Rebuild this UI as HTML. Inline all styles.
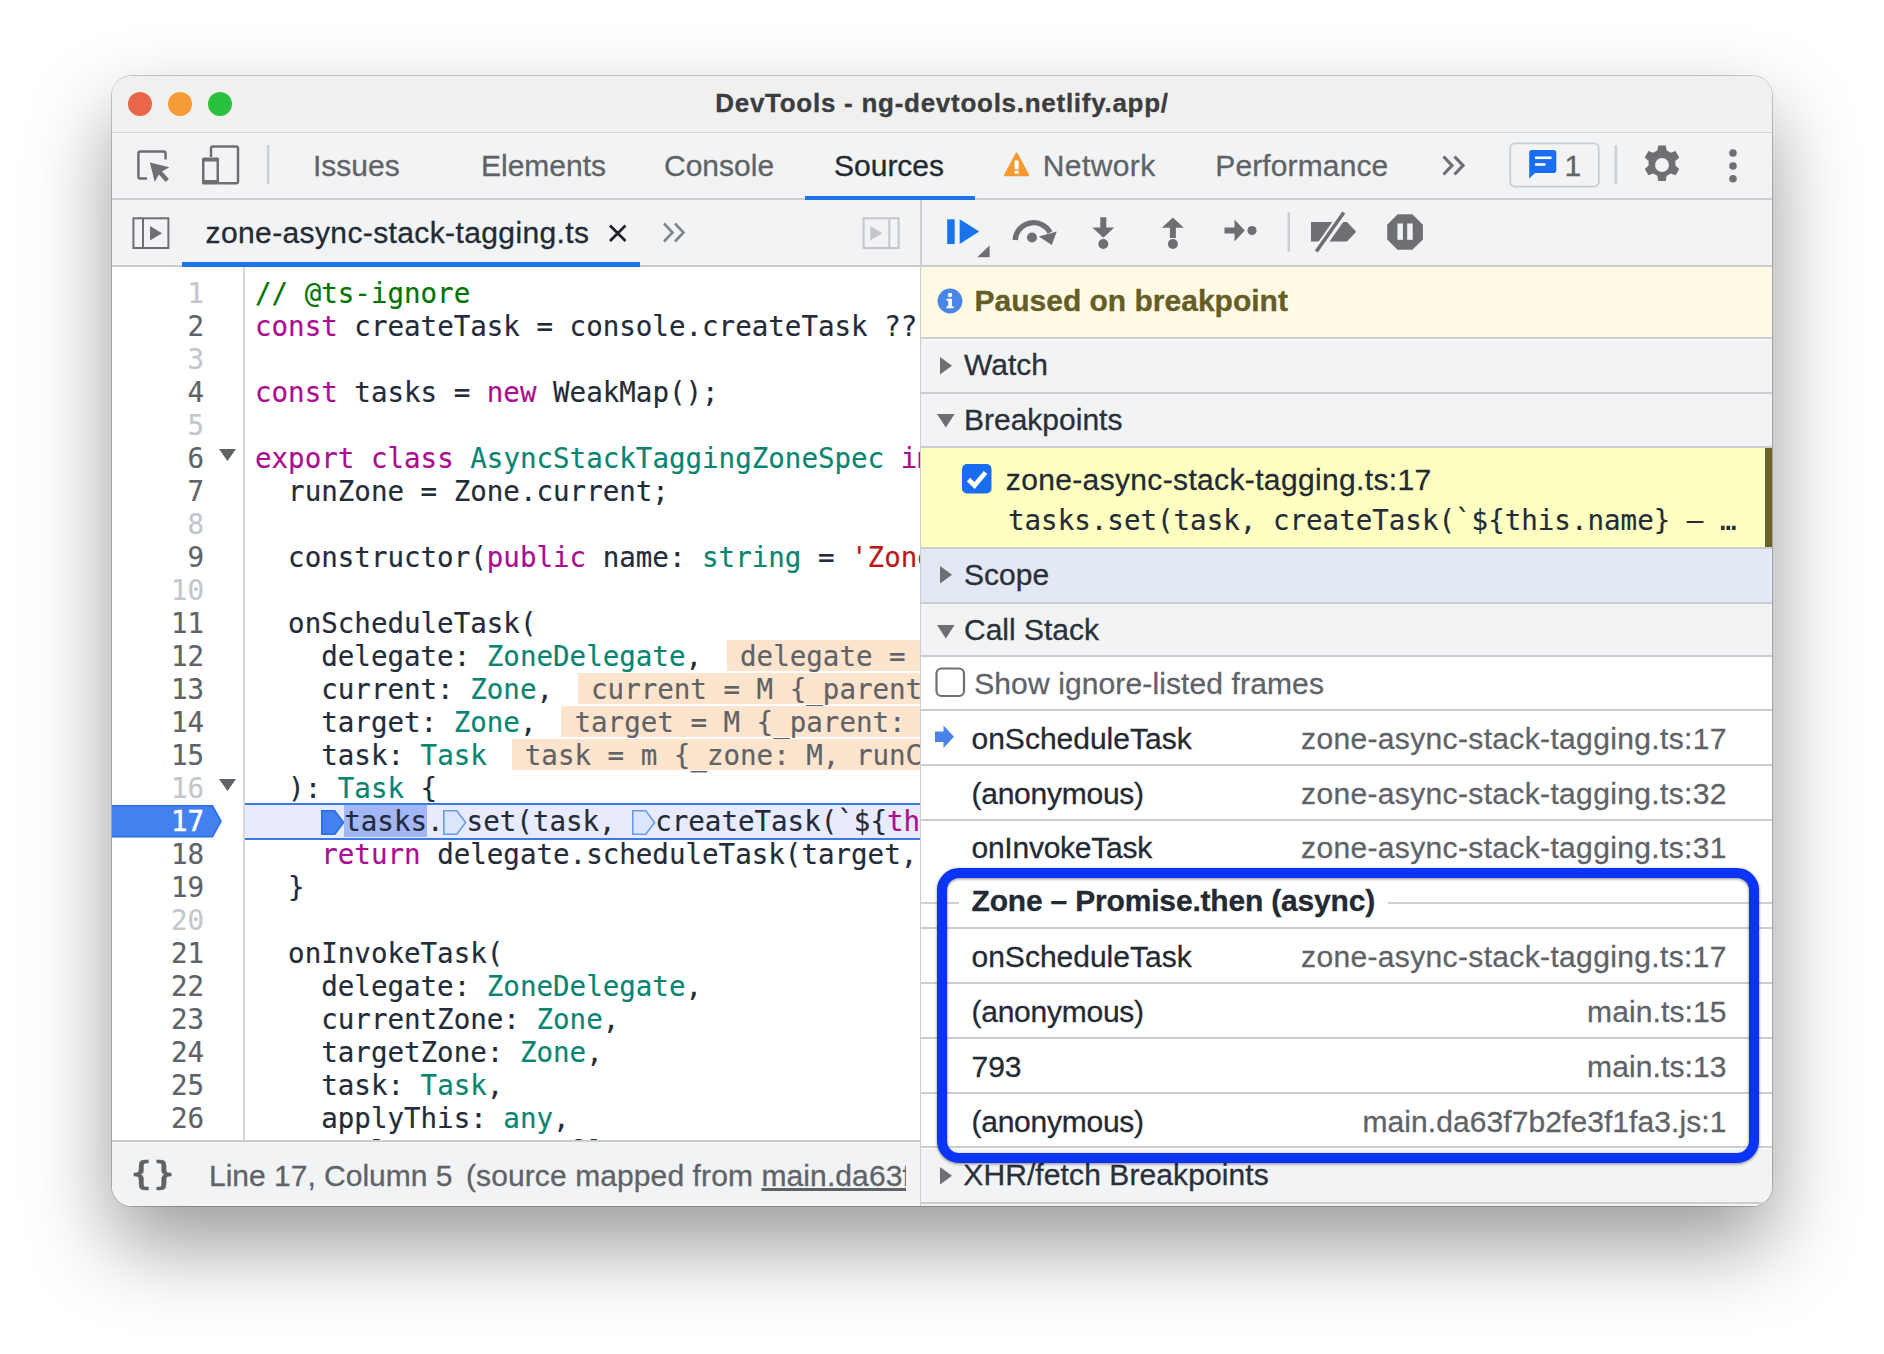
<!DOCTYPE html>
<html lang="en">
<head>
<meta charset="utf-8">
<title>DevTools - ng-devtools.netlify.app/</title>
<style>
*{box-sizing:border-box;margin:0;padding:0}
html,body{width:1884px;height:1354px;background:#fff;overflow:hidden}
body{position:relative;font-family:"Liberation Sans",Arial,sans-serif;color:#202124}
.abs{position:absolute}
#shadow{position:absolute;left:112px;top:76px;width:1660px;height:1130px;border-radius:20px;
  box-shadow:0 0 0 1px rgba(0,0,0,.2),0 39px 84px rgba(0,0,0,.4);background:#f1f3f4}
#win{position:absolute;left:0;top:0;width:1884px;height:1354px;clip-path:inset(76px 112px 148px 112px round 20px);background:#fff}
.hl{position:absolute;background:#cbcdd1}
.ui{position:absolute;white-space:nowrap;font-size:30px;line-height:36px;color:#5f6368;-webkit-text-stroke:.3px}
.mono{font-family:"DejaVu Sans Mono","Liberation Mono",monospace}
/* code */
#code{position:absolute;left:112px;top:267px;width:808px;height:874px;overflow:hidden;background:#fff}
.ln,.cl{font-family:"DejaVu Sans Mono","Liberation Mono",monospace}
.ln{position:absolute;left:0;margin-top:.3px;-webkit-text-stroke:.2px;width:92px;text-align:right;font-size:27.5px;line-height:33px;height:33px;color:#5f6368;white-space:pre}
.ln.dim{color:#c3c6ca}
.cl{position:absolute;left:143px;margin-top:.3px;-webkit-text-stroke:.18px;font-size:27.5px;line-height:33px;height:33px;white-space:pre;color:#232c38}
.k{color:#ab0d90}.c{color:#007400}.t{color:#088571}.s{color:#bb171a}
.iv{background:linear-gradient(#fde5cd,#fde5cd) no-repeat 0 0/100% 31px;color:#5f6368}

.iv{margin-left:25px;padding:0 13px}
.sel{background:#a3b6f8}
.bp{display:inline-block;width:23px;height:25px;vertical-align:-4px;margin-left:-.300px;margin-right:.300px}
.bp svg{display:block}
</style>
</head>
<body>
<div id="shadow"></div>
<div id="win">
<!-- title bar -->
<div class="abs" id="titlebar" style="left:112px;top:75px;width:1660px;height:58px;background:#f0f0ef"></div>
<div class="abs" style="left:128px;top:92px;width:24px;height:24px;border-radius:50%;background:#e8674a"></div>
<div class="abs" style="left:168px;top:92px;width:24px;height:24px;border-radius:50%;background:#f59b38"></div>
<div class="abs" style="left:208px;top:92px;width:24px;height:24px;border-radius:50%;background:#2ac13f"></div>
<div class="abs" id="title" style="left:112px;width:1660px;top:86px;text-align:center;font-weight:bold;font-size:26px;line-height:34px;color:#3b3d40;white-space:nowrap;letter-spacing:.73px;-webkit-text-stroke:.3px">DevTools - ng-devtools.netlify.app/</div>
<div class="hl" style="left:112px;top:132.200px;width:1660px;height:1.300px;background:#d3d4d6"></div>

<!-- main toolbar -->
<div class="abs" id="maintb" style="left:112px;top:133px;width:1660px;height:65px;background:#f1f3f4"></div>
<div class="hl" style="left:112px;top:198px;width:1660px;height:2px"></div>

<svg class="abs" style="left:112px;top:134px" width="1660" height="132" viewBox="112 134 1660 132" fill="none">
<!-- inspect -->
<path d="M165.6 159.5V153.6a2.2 2.2 0 0 0-2.2-2.2H140.6a2.2 2.2 0 0 0-2.2 2.2v22.8a2.2 2.2 0 0 0 2.2 2.2H147" stroke="#6e6f72" stroke-width="2.5"/>
<path d="M149.8 162.6l19.6 4.6-7.4 4.4 6.9 7.3-3.2 3-6.9-7.3-4 7.5z" fill="#6e6f72"/>
<!-- device -->
<path d="M211 157V148.4a1.8 1.8 0 0 1 1.8-1.8h23.4a1.8 1.8 0 0 1 1.8 1.8v33a1.8 1.8 0 0 1-1.8 1.8H219" stroke="#6e6f72" stroke-width="2.5"/>
<path d="M203.5 157.5h14a1.5 1.5 0 0 1 1.5 1.5v24a1.5 1.5 0 0 1-1.5 1.5h-14a1.5 1.5 0 0 1-1.5-1.5v-24a1.5 1.5 0 0 1 1.5-1.5zM204.5 161.5v18.5h12v-18.5z" fill="#6e6f72" fill-rule="evenodd"/>
<rect x="266.800" y="145" width="2.600" height="39" fill="#cdcfd2"/>
<!-- warning -->
<path d="M1017.700 153.200l11.300 21.200a1.300 1.300 0 0 1-1.100 1.900h-22.600a1.300 1.300 0 0 1-1.100-1.900l11.300-21.200a1.250 1.250 0 0 1 2.200 0z" fill="#f59a30"/>
<rect x="1014.500" y="160.600" width="4.200" height="8.600" rx="1" fill="#fff"/><rect x="1014.500" y="170.700" width="4.200" height="3" fill="#fff"/>
<!-- more tabs -->
<path d="M1443.5 156.5l8.5 9-8.5 9M1454.5 156.5l8.5 9-8.5 9" stroke="#6e6f72" stroke-width="3.2"/>
<!-- badge -->
<rect x="1510.2" y="143.4" width="88.6" height="43.2" rx="5" stroke="#c9ccd0" stroke-width="1.8"/>
<path d="M1532 150h21.5a2.8 2.8 0 0 1 2.8 2.8v17.4a2.8 2.8 0 0 1-2.8 2.8H1535l-5.8 5.6V152.8a2.8 2.8 0 0 1 2.8-2.8z" fill="#1a6cf0"/>
<rect x="1535" y="156.5" width="16.5" height="2.6" fill="#fff"/><rect x="1535" y="163.2" width="10.5" height="2.6" fill="#fff"/>
<rect x="1614.600" y="145" width="2.600" height="39" fill="#cdcfd2"/>
<!-- gear -->
<g transform="translate(1662 165) scale(1.12)"><path id="gearp" fill="#6e6f72" fill-rule="evenodd" d="M-3.3 -17.5h6.6l.9 4.6a13 13 0 0 1 3.5 2l4.4-1.5 3.3 5.7-3.5 3.1a13 13 0 0 1 0 4l3.5 3.100-3.3 5.700-4.400-1.500a13 13 0 0 1-3.500 2l-.900 4.600h-6.600l-.900-4.600a13 13 0 0 1-3.500-2l-4.400 1.500-3.300-5.700 3.500-3.100a13 13 0 0 1 0-4l-3.500-3.100 3.300-5.700 4.400 1.500a13 13 0 0 1 3.500-2zM0 -6.200a6.200 6.200 0 1 0 0 12.400a6.200 6.200 0 1 0 0-12.400z"/></g>
<circle cx="1733" cy="153" r="3.8" fill="#6e6f72"/><circle cx="1733" cy="166" r="3.8" fill="#6e6f72"/><circle cx="1733" cy="178.800" r="3.8" fill="#6e6f72"/>
</svg>
<div class="ui" style="left:313px;top:148px">Issues</div>
<div class="ui" style="left:481px;top:148px">Elements</div>
<div class="ui" style="left:664px;top:148px">Console</div>
<div class="ui" style="left:834px;top:148px;color:#232a33">Sources</div>
<div class="ui" style="left:1042.800px;top:148px;letter-spacing:.4px">Network</div>
<div class="ui" style="left:1215.300px;top:148px;letter-spacing:.12px">Performance</div>
<div class="ui" style="left:1564.500px;top:148px">1</div>
<div class="abs" style="left:805px;top:195.700px;width:170px;height:4.300px;background:#1a73e8"></div>


<!-- secondary bars -->
<div class="abs" style="left:112px;top:200px;width:1660px;height:66px;background:#f1f3f4"></div>
<div class="hl" style="left:112px;top:265px;width:1660px;height:2px"></div>

<svg class="abs" style="left:112px;top:200px" width="808" height="66" viewBox="112 200 808 66" fill="none">
<rect x="133.400" y="218.300" width="35" height="29.700" stroke="#6e6f72" stroke-width="2"/>
<path d="M143 218v30" stroke="#6e6f72" stroke-width="2"/><path d="M150 226l12 7.200-12 7.200z" fill="#6e6f72"/>
<path d="M610 225.500l15.500 15.500M625.500 225.500l-15.500 15.500" stroke="#202124" stroke-width="2.800"/>
<path d="M664 223.500l8.500 9-8.500 9M675 223.500l8.500 9-8.500 9" stroke="#80868b" stroke-width="2.600"/>
<rect x="863.600" y="218.300" width="35" height="29.700" stroke="#c4c6c9" stroke-width="2"/>
<path d="M889.300 218v30" stroke="#c4c6c9" stroke-width="2"/><path d="M870.300 226l12 7.200-12 7.200z" fill="#c4c6c9"/>
</svg>
<div class="ui" style="left:205.600px;top:215.300px;color:#232a33;letter-spacing:.38px" id="ftab">zone-async-stack-tagging.ts</div>
<div class="abs" style="left:182px;top:262px;width:458px;height:5px;background:#1a73e8"></div>


<svg class="abs" style="left:921px;top:200px" width="851" height="66" viewBox="921 200 851 66" fill="none">
<rect x="947.200" y="219.300" width="7.500" height="24.700" fill="#1a73e8"/><path d="M959.700 219.300l19.500 12.300-19.500 12.400z" fill="#1a73e8"/>
<path d="M989.600 245.500v11.700h-12.400z" fill="#6e6f72"/>
<!-- step over -->
<path d="M1015.200 240A18.500 18.500 0 0 1 1050 232.500" stroke="#6e6f72" stroke-width="5.400"/>
<path d="M1056.800 231.500l-5 13.500-13-8.500z" fill="#6e6f72"/>
<circle cx="1032" cy="237.500" r="5" fill="#6e6f72"/>
<!-- step into -->
<path d="M1100.300 217.300h6v10.200h8l-11 10.300-11-10.300h8z" fill="#6e6f72"/><circle cx="1103.300" cy="244" r="5" fill="#6e6f72"/>
<!-- step out -->
<path d="M1169.900 238h6v-10.200h8l-11-10.300-11 10.300h8z" fill="#6e6f72"/><circle cx="1172.900" cy="244" r="5" fill="#6e6f72"/>
<!-- step -->
<path d="M1224.500 227.500h10v-8l10.300 11-10.300 11v-8h-10z" fill="#6e6f72"/><circle cx="1252" cy="230.500" r="4.600" fill="#6e6f72"/>
<rect x="1287.500" y="212.500" width="2.500" height="39" fill="#cbcdd1"/>
<!-- deactivate -->
<path d="M1311 222h36l9.200 9.700-9.200 9.800h-36z" fill="#6e6f72"/>
<path d="M1345.500 211l-29.500 42" stroke="#f1f3f4" stroke-width="9"/>
<path d="M1343.800 212.500l-27.500 39" stroke="#6e6f72" stroke-width="3.600"/>
<!-- pause exc -->
<path d="M1397.600 214.300h14.800l10.500 10.400v14.700l-10.500 10.400h-14.800l-10.400-10.400v-14.700z" fill="#6e6f72"/>
<rect x="1397.400" y="223.500" width="5.500" height="16.300" fill="#f1f3f4"/><rect x="1407.200" y="223.500" width="5.500" height="16.300" fill="#f1f3f4"/>
</svg>


<!-- code -->
<div id="code">
<div class="abs" style="left:133px;top:535.600px;width:680px;height:37.400px;background:#e8ebfd;border-top:2.400px solid #3b79e6;border-bottom:2.400px solid #3b79e6"></div>
<div class="abs" style="left:131px;top:0;width:2px;height:874px;background:#d5d7da"></div>
<svg class="abs" style="left:0;top:538px" width="112" height="33" viewBox="0 0 112 33"><path d="M-2 .800h102.500l8.500 15.500-8.500 15.500h-102.500z" fill="#4381f0" stroke="#2a6fe6" stroke-width="1.600"/></svg>
<div class="ln dim" style="top:10px">1</div>
<div class="cl" style="top:10px"><span class="c">// @ts-ignore</span></div>
<div class="ln" style="top:43px">2</div>
<div class="cl" style="top:43px"><span class="k">const</span> createTask = console.createTask ?? (() =&gt; {});</div>
<div class="ln dim" style="top:76px">3</div>
<div class="ln" style="top:109px">4</div>
<div class="cl" style="top:109px"><span class="k">const</span> tasks = <span class="k">new</span> WeakMap();</div>
<div class="ln dim" style="top:142px">5</div>
<div class="ln" style="top:175px">6</div>
<div class="cl" style="top:175px"><span class="k">export</span> <span class="k">class</span> <span class="t">AsyncStackTaggingZoneSpec</span> <span class="k">implements</span> <span class="t">ZoneSpec</span> {</div>
<div class="ln" style="top:208px">7</div>
<div class="cl" style="top:208px">  runZone = Zone.current;</div>
<div class="ln dim" style="top:241px">8</div>
<div class="ln" style="top:274px">9</div>
<div class="cl" style="top:274px">  constructor(<span class="k">public</span> name: <span class="t">string</span> = <span class="s">'Zone'</span>) {}</div>
<div class="ln dim" style="top:307px">10</div>
<div class="ln" style="top:340px">11</div>
<div class="cl" style="top:340px">  onScheduleTask(</div>
<div class="ln" style="top:373px">12</div>
<div class="cl" style="top:373px">    delegate: <span class="t">ZoneDelegate</span>,<span class="iv">delegate = l {_zone: M, _taskCounts: {…}}</span></div>
<div class="ln" style="top:406px">13</div>
<div class="cl" style="top:406px">    current: <span class="t">Zone</span>,<span class="iv">current = M {_parent: M, _name: 'angular'}</span></div>
<div class="ln" style="top:439px">14</div>
<div class="cl" style="top:439px">    target: <span class="t">Zone</span>,<span class="iv">target = M {_parent: M, _name: 'angular'}</span></div>
<div class="ln" style="top:472px">15</div>
<div class="cl" style="top:472px">    task: <span class="t">Task</span><span class="iv">task = m {_zone: M, runCount: 0}</span></div>
<div class="ln dim" style="top:505px">16</div>
<div class="cl" style="top:505px">  ): <span class="t">Task</span> {</div>
<div class="ln" style="top:538px;color:#fff;-webkit-text-stroke:.5px #fff">17</div>
<div class="cl" style="top:538px">    <span class="bp"><svg width="24" height="25" viewBox="0 0 24 25"><path d="M.800 .800h13l8.800 11.700-8.800 11.700h-13z" fill="#4381f0" stroke="#2a6fe6" stroke-width="1.600"/></svg></span><span class="sel">tasks</span>.<span class="bp"><svg width="24" height="25" viewBox="0 0 24 25"><path d="M.800 .800h13l8.800 11.700-8.800 11.700h-13z" fill="#dbe5fb" stroke="#6b9bee" stroke-width="1.600"/></svg></span>set(task, <span class="bp"><svg width="24" height="25" viewBox="0 0 24 25"><path d="M.800 .800h13l8.800 11.700-8.800 11.700h-13z" fill="#dbe5fb" stroke="#6b9bee" stroke-width="1.600"/></svg></span>createTask(`${<span class="k">this</span>.name} – ${task.source}`));</div>
<div class="ln" style="top:571px">18</div>
<div class="cl" style="top:571px">    <span class="k">return</span> delegate.scheduleTask(target, task);</div>
<div class="ln" style="top:604px">19</div>
<div class="cl" style="top:604px">  }</div>
<div class="ln dim" style="top:637px">20</div>
<div class="ln" style="top:670px">21</div>
<div class="cl" style="top:670px">  onInvokeTask(</div>
<div class="ln" style="top:703px">22</div>
<div class="cl" style="top:703px">    delegate: <span class="t">ZoneDelegate</span>,</div>
<div class="ln" style="top:736px">23</div>
<div class="cl" style="top:736px">    currentZone: <span class="t">Zone</span>,</div>
<div class="ln" style="top:769px">24</div>
<div class="cl" style="top:769px">    targetZone: <span class="t">Zone</span>,</div>
<div class="ln" style="top:802px">25</div>
<div class="cl" style="top:802px">    task: <span class="t">Task</span>,</div>
<div class="ln" style="top:835px">26</div>
<div class="cl" style="top:835px">    applyThis: <span class="t">any</span>,</div>
<div class="ln" style="top:868px">27</div>
<div class="cl" style="top:868px">    applyArgs?: <span class="t">any</span>[],</div>
<svg class="abs" style="left:107px;top:181.5px" width="17" height="12" viewBox="0 0 17 12"><path d="M0 0h17l-8.500 12z" fill="#5f6368"/></svg>
<svg class="abs" style="left:107px;top:511.5px" width="17" height="12" viewBox="0 0 17 12"><path d="M0 0h17l-8.500 12z" fill="#5f6368"/></svg>
</div>

<!-- status bar -->
<div class="hl" style="left:112px;top:1140px;width:808px;height:2px"></div>
<div class="abs" style="left:112px;top:1142px;width:808px;height:64px;background:#f1f3f4"></div>

<div class="ui mono" style="left:131px;top:1155px;font-weight:bold;font-size:32px;letter-spacing:2.300px;transform:scaleX(1.06);transform-origin:0 0" id="braces">{}</div>
<div class="ui" style="left:209px;top:1158px">Line 17, Column 5</div>
<div class="ui" style="left:466px;top:1158px;width:440px;overflow:hidden;letter-spacing:.1px" id="srcmap">(source mapped from <span style="text-decoration:underline">main.da63f7b2fe3f1fa3.js</span>)</div>


<!-- splitter -->
<div class="hl" style="left:919.800px;top:200px;width:2.200px;height:1006px"></div>

<!-- right panel -->
<div class="abs" id="right" style="left:921px;top:267px;width:851px;height:939px;background:#fff"></div>
<div class="abs" style="left:921px;top:267px;width:851px;height:71px;background:#fefae4"></div>
<div class="abs" style="left:921px;top:336.800px;width:851px;height:2px;background:#cbcdd1"></div>
<svg class="abs" style="left:936.600px;top:287.600px" width="26" height="26" viewBox="0 0 26 26"><circle cx="13" cy="13" r="12.400" fill="#4a86e8"/><rect x="11.200" y="10.800" width="3.800" height="9" fill="#fff"/><rect x="9.500" y="10.800" width="4" height="2" fill="#fff"/><rect x="9.500" y="18.300" width="7.200" height="2" fill="#fff"/><circle cx="13" cy="7" r="2.200" fill="#fff"/></svg>
<div class="ui" style="left:974.500px;top:283px;font-weight:bold;color:#655d26">Paused on breakpoint</div>
<div class="abs" style="left:921px;top:339.5px;width:851px;height:52.5px;background:#f1f3f4"></div>
<svg class="abs" style="left:939.5px;top:356.75px" width="13" height="18" viewBox="0 0 13 18"><path d="M0 0l12 8.800-12 8.800z" fill="#6e6f72"/></svg>
<div class="ui" style="left:964px;top:346.600px;color:#2a3039">Watch</div>
<div class="abs" style="left:921px;top:392px;width:851px;height:2px;background:#cbcdd1"></div>
<div class="abs" style="left:921px;top:394px;width:851px;height:51.5px;background:#f1f3f4"></div>
<svg class="abs" style="left:937px;top:414.25px" width="18" height="14" viewBox="0 0 18 14"><path d="M0 0h17.600l-8.800 13.500z" fill="#6e6f72"/></svg>
<div class="ui" style="left:964px;top:401.75px;color:#2a3039">Breakpoints</div>
<div class="abs" style="left:921px;top:445.5px;width:851px;height:2px;background:#cbcdd1"></div>
<div class="abs" style="left:921px;top:447.500px;width:851px;height:99px;background:#ffffc2"></div>
<div class="abs" style="left:1765px;top:447.500px;width:7px;height:99px;background:#6b6126"></div>
<svg class="abs" style="left:962px;top:464px" width="30" height="30" viewBox="0 0 30 30"><rect x="0" y="0" width="29.500" height="29.500" rx="5" fill="#1a6cf0"/><path d="M6.500 15.500l6 6 11-13" stroke="#fff" stroke-width="4.600" fill="none" stroke-linecap="butt"/></svg>
<div class="ui" style="left:1005.800px;top:462px;color:#242a33;letter-spacing:.35px" id="bpname">zone-async-stack-tagging.ts:17</div>
<div class="ui mono" style="left:1008px;top:503px;color:#232c38;font-size:27.500px;line-height:34px;-webkit-text-stroke:.18px">tasks.set(task, createTask(`${this.name} – …</div>
<div class="abs" style="left:921px;top:546.5px;width:851px;height:2px;background:#cbcdd1"></div>
<div class="abs" style="left:921px;top:548.5px;width:851px;height:53.5px;background:#e2e8f4"></div>
<svg class="abs" style="left:939.5px;top:566.25px" width="13" height="18" viewBox="0 0 13 18"><path d="M0 0l12 8.800-12 8.800z" fill="#6e6f72"/></svg>
<div class="ui" style="left:964px;top:556.700px;color:#2a3039">Scope</div>
<div class="abs" style="left:921px;top:602px;width:851px;height:2px;background:#cbcdd1"></div>
<div class="abs" style="left:921px;top:604px;width:851px;height:52px;background:#f1f3f4"></div>
<svg class="abs" style="left:937px;top:624.5px" width="18" height="14" viewBox="0 0 18 14"><path d="M0 0h17.600l-8.800 13.500z" fill="#6e6f72"/></svg>
<div class="ui" style="left:964px;top:612.0px;color:#2a3039">Call Stack</div>
<div class="abs" style="left:921px;top:655.2px;width:851px;height:2px;background:#cbcdd1"></div>
<svg class="abs" style="left:935px;top:667px" width="31" height="31" viewBox="0 0 31 31"><rect x="1.500" y="1.500" width="27.500" height="27.500" rx="5" fill="#fff" stroke="#6e6f72" stroke-width="2.200"/></svg>
<div class="ui" style="left:974.200px;top:666px;color:#5f6368;letter-spacing:.12px">Show ignore-listed frames</div>
<div class="abs" style="left:921px;top:708.5px;width:851px;height:2px;background:#cbcdd1"></div>
<div class="ui" style="left:971.500px;top:720.5px;color:#242a33;letter-spacing:0px">onScheduleTask</div>
<div class="ui" style="right:157.25px;top:720.5px;color:#5f6368;letter-spacing:0.35px">zone-async-stack-tagging.ts:17</div>
<div class="ui" style="left:971.500px;top:775.5px;color:#242a33;letter-spacing:-0.25px">(anonymous)</div>
<div class="ui" style="right:157.25px;top:775.5px;color:#5f6368;letter-spacing:0.35px">zone-async-stack-tagging.ts:32</div>
<div class="ui" style="left:971.500px;top:830.3px;color:#242a33;letter-spacing:-0.25px">onInvokeTask</div>
<div class="ui" style="right:157.25px;top:830.3px;color:#5f6368;letter-spacing:0.35px">zone-async-stack-tagging.ts:31</div>
<div class="ui" style="left:971.500px;top:939.200px;color:#242a33;letter-spacing:0px">onScheduleTask</div>
<div class="ui" style="right:157.25px;top:939.200px;color:#5f6368;letter-spacing:0.35px">zone-async-stack-tagging.ts:17</div>
<div class="ui" style="left:971.500px;top:994px;color:#242a33;letter-spacing:-0.25px">(anonymous)</div>
<div class="ui" style="right:157.5px;top:994px;color:#5f6368;letter-spacing:0.1px">main.ts:15</div>
<div class="ui" style="left:971.500px;top:1048.6px;color:#242a33;letter-spacing:0px">793</div>
<div class="ui" style="right:157.5px;top:1048.6px;color:#5f6368;letter-spacing:0.1px">main.ts:13</div>
<div class="ui" style="left:971.500px;top:1103.6px;color:#242a33;letter-spacing:-0.25px">(anonymous)</div>
<div class="ui" style="right:157.520px;top:1103.6px;color:#5f6368;letter-spacing:0.08px">main.da63f7b2fe3f1fa3.js:1</div>
<div class="abs" style="left:921px;top:763.6px;width:851px;height:2px;background:#cbcdd1"></div>
<div class="abs" style="left:921px;top:818.5px;width:851px;height:2px;background:#cbcdd1"></div>
<div class="abs" style="left:921px;top:927.400px;width:851px;height:2px;background:#cbcdd1"></div>
<div class="abs" style="left:921px;top:981.6px;width:851px;height:2px;background:#cbcdd1"></div>
<div class="abs" style="left:921px;top:1036.6px;width:851px;height:2px;background:#cbcdd1"></div>
<div class="abs" style="left:921px;top:1091.5px;width:851px;height:2px;background:#cbcdd1"></div>
<div class="abs" style="left:921px;top:1146.3px;width:851px;height:2px;background:#cbcdd1"></div>
<svg class="abs" style="left:934px;top:725px" width="21" height="24" viewBox="0 0 21 24"><path d="M1 6.500h8.500v-6l10.500 11.200-10.500 11.200v-6h-8.500z" fill="#4a82ea"/></svg>
<div class="abs" style="left:921px;top:901.900px;width:851px;height:1.900px;background:#cfd1d5"></div>
<div class="ui" style="left:958.500px;top:883px;color:#242a33;font-weight:bold;background:#fff;padding:0 13px;letter-spacing:-.18px" id="asynch">Zone – Promise.then (async)</div>
<div class="abs" style="left:921px;top:1149px;width:851px;height:53px;background:#f1f3f4"></div>
<svg class="abs" style="left:939.5px;top:1166.5px" width="13" height="18" viewBox="0 0 13 18"><path d="M0 0l12 8.800-12 8.800z" fill="#6e6f72"/></svg>
<div class="ui" style="left:963.300px;top:1156.500px;color:#2a3039;letter-spacing:.1px">XHR/fetch Breakpoints</div>
<div class="abs" style="left:921px;top:1202px;width:851px;height:2px;background:#cbcdd1"></div>
<div class="abs" style="left:921px;top:1204px;width:851px;height:4px;background:#f1f3f4"></div>
</div>
<div class="abs" style="left:937px;top:867.800px;width:822px;height:294.800px;border:10.300px solid #0a34f8;border-radius:22px;filter:drop-shadow(0 1.500px 1.500px rgba(0,0,0,.45))"></div>
</body>
</html>
